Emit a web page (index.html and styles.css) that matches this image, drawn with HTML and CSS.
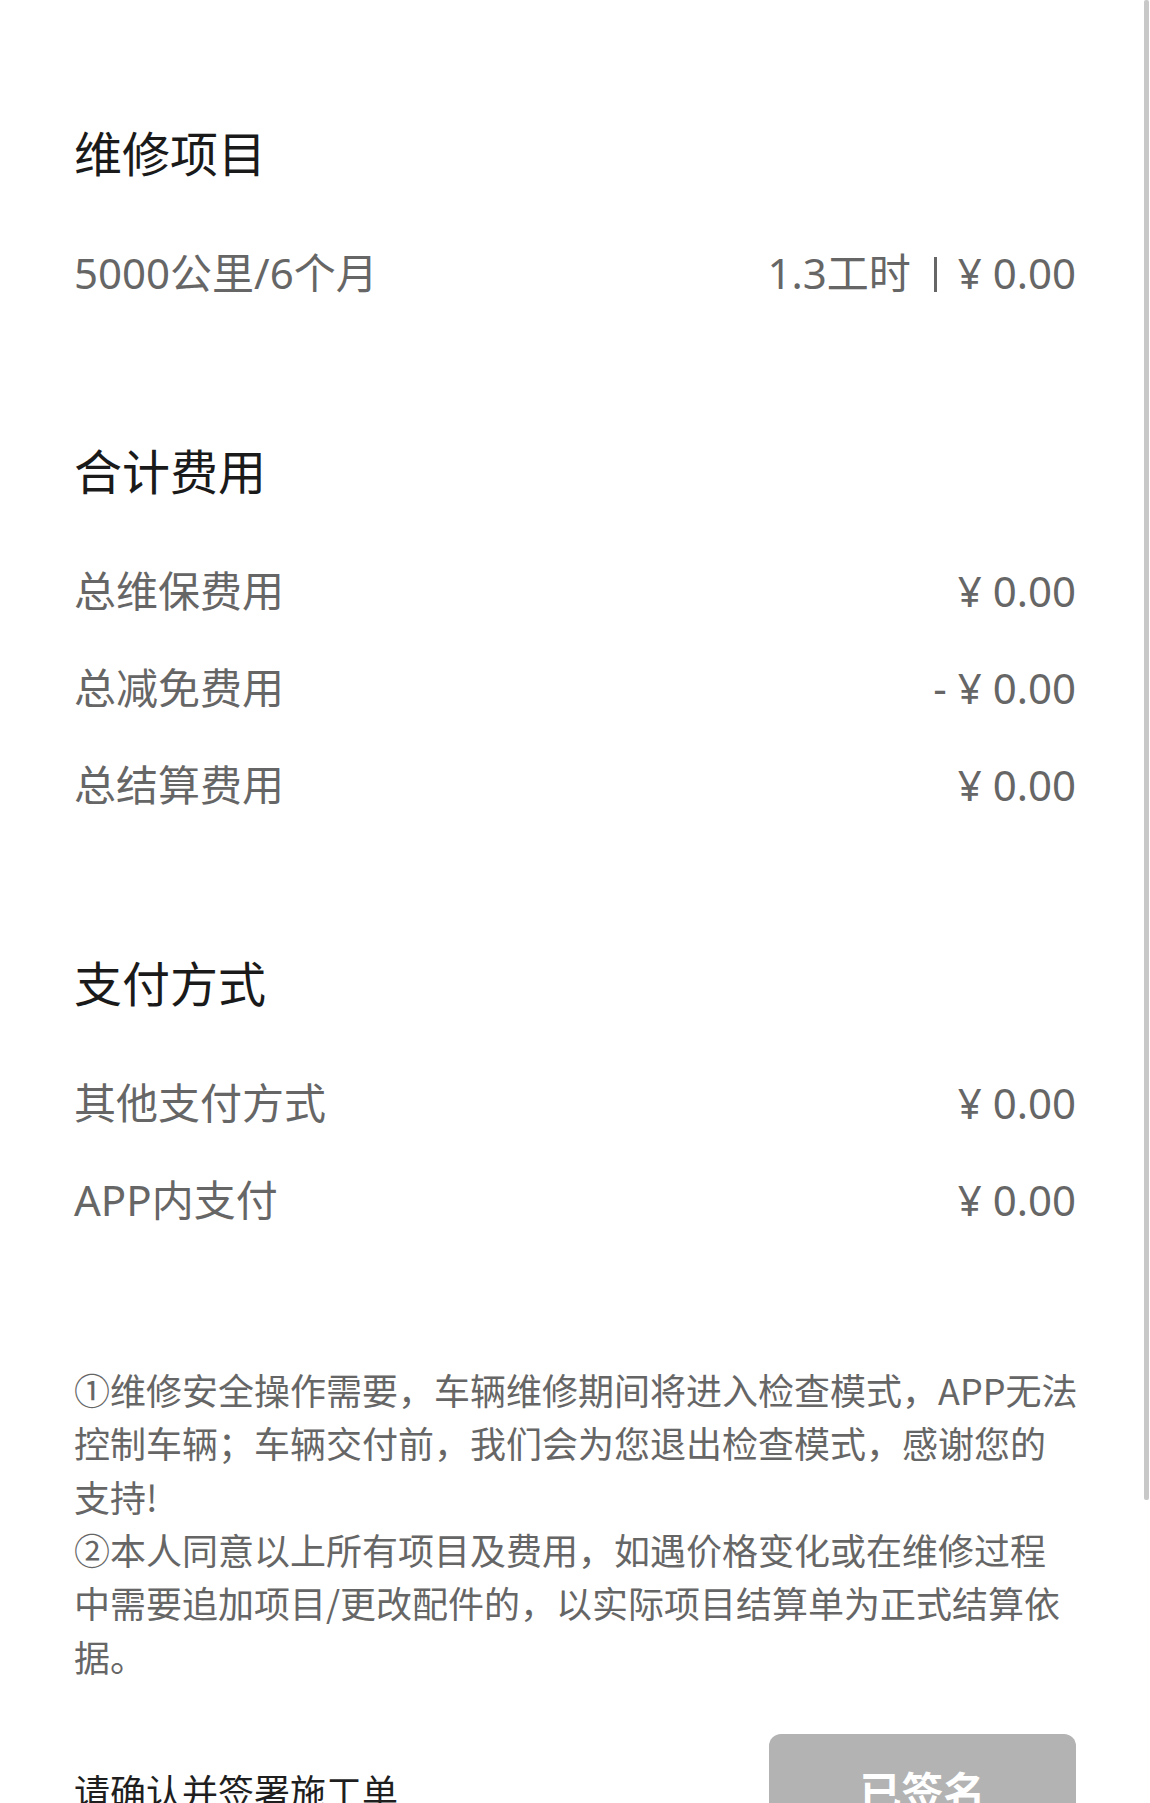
FILE: index.html
```html
<!DOCTYPE html>
<html lang="zh-CN">
<head>
<meta charset="UTF-8">
<meta name="viewport" content="width=device-width, initial-scale=1.0">
<title>施工单确认</title>
<link rel="stylesheet" href="styles.css">
</head>
<body>

<div class="page">
    <section class="block">
        <h2 class="block-title">维修项目</h2>
        <div class="row">
            <span class="row-label">5000公里/6个月</span>
            <span class="row-value">1.3工时<i class="sep"></i>¥ 0.00</span>
        </div>
    </section>

    <section class="block">
        <h2 class="block-title">合计费用</h2>
        <div class="row">
            <span class="row-label">总维保费用</span>
            <span class="row-value">¥ 0.00</span>
        </div>
        <div class="row">
            <span class="row-label">总减免费用</span>
            <span class="row-value">- ¥ 0.00</span>
        </div>
        <div class="row">
            <span class="row-label">总结算费用</span>
            <span class="row-value">¥ 0.00</span>
        </div>
    </section>

    <section class="block">
        <h2 class="block-title">支付方式</h2>
        <div class="row">
            <span class="row-label">其他支付方式</span>
            <span class="row-value">¥ 0.00</span>
        </div>
        <div class="row">
            <span class="row-label">APP内支付</span>
            <span class="row-value">¥ 0.00</span>
        </div>
    </section>

    <div class="notes">
        <p>①维修安全操作需要，车辆维修期间将进入检查模式，APP无法控制车辆；车辆交付前，我们会为您退出检查模式，感谢您的支持!</p>
        <p>②本人同意以上所有项目及费用，如遇价格变化或在维修过程中需要追加项目/更改配件的，以实际项目结算单为正式结算依据。</p>
    </div>

    <div class="sign-bar">
        <span class="sign-tip">请确认并签署施工单</span>
        <button class="sign-btn" disabled>已签名</button>
    </div>
</div>

<!-- scroll thumb on the right edge -->
<div class="scroll-thumb"></div>

</body>
</html>
```

FILE: styles.css
```css
body {
    margin: 0;
    background-color: #fff;
    font-family: "Noto Sans CJK SC", "Noto Sans", sans-serif;
    color: #666;
}
.page {
    padding: 119px 74px 0;
}
.block + .block {
    margin-top: 117px;
}
.block-title {
    margin: 0 0 40px;
    font-size: 48px;
    line-height: 64px;
    font-weight: normal;
    color: #1a1a1a;
}
.row {
    display: flex;
    justify-content: space-between;
    align-items: center;
    padding: 21px 0 19px;
    font-family: "Noto Sans", "Noto Sans CJK SC", sans-serif;
    font-size: 42px;
    line-height: 57px;
}
.sep {
    display: inline-block;
    width: 3px;
    height: 35px;
    margin: 0 21px 0 23px;
    vertical-align: -3px;
    background-color: #666;
}
.notes {
    margin-top: 116px;
    margin-right: -2px;
    font-size: 36px;
    line-height: 53.33px;
}
.notes p {
    margin: 0;
}
.sign-bar {
    display: flex;
    justify-content: space-between;
    align-items: center;
    margin-top: 51px;
}
.sign-tip {
    font-size: 36px;
    line-height: 50px;
    color: #1f1f1f;
}
.sign-btn {
    width: 307px;
    height: 112px;
    border: none;
    border-radius: 12px;
    background-color: #b3b3b3;
    color: #fff;
    font-family: inherit;
    font-size: 42px;
    font-weight: bold;
}
.scroll-thumb {
    position: absolute;
    top: 0;
    right: 1px;
    width: 5px;
    height: 1500px;
    background-color: #c8c8c8;
    border-radius: 2px;
}
```
